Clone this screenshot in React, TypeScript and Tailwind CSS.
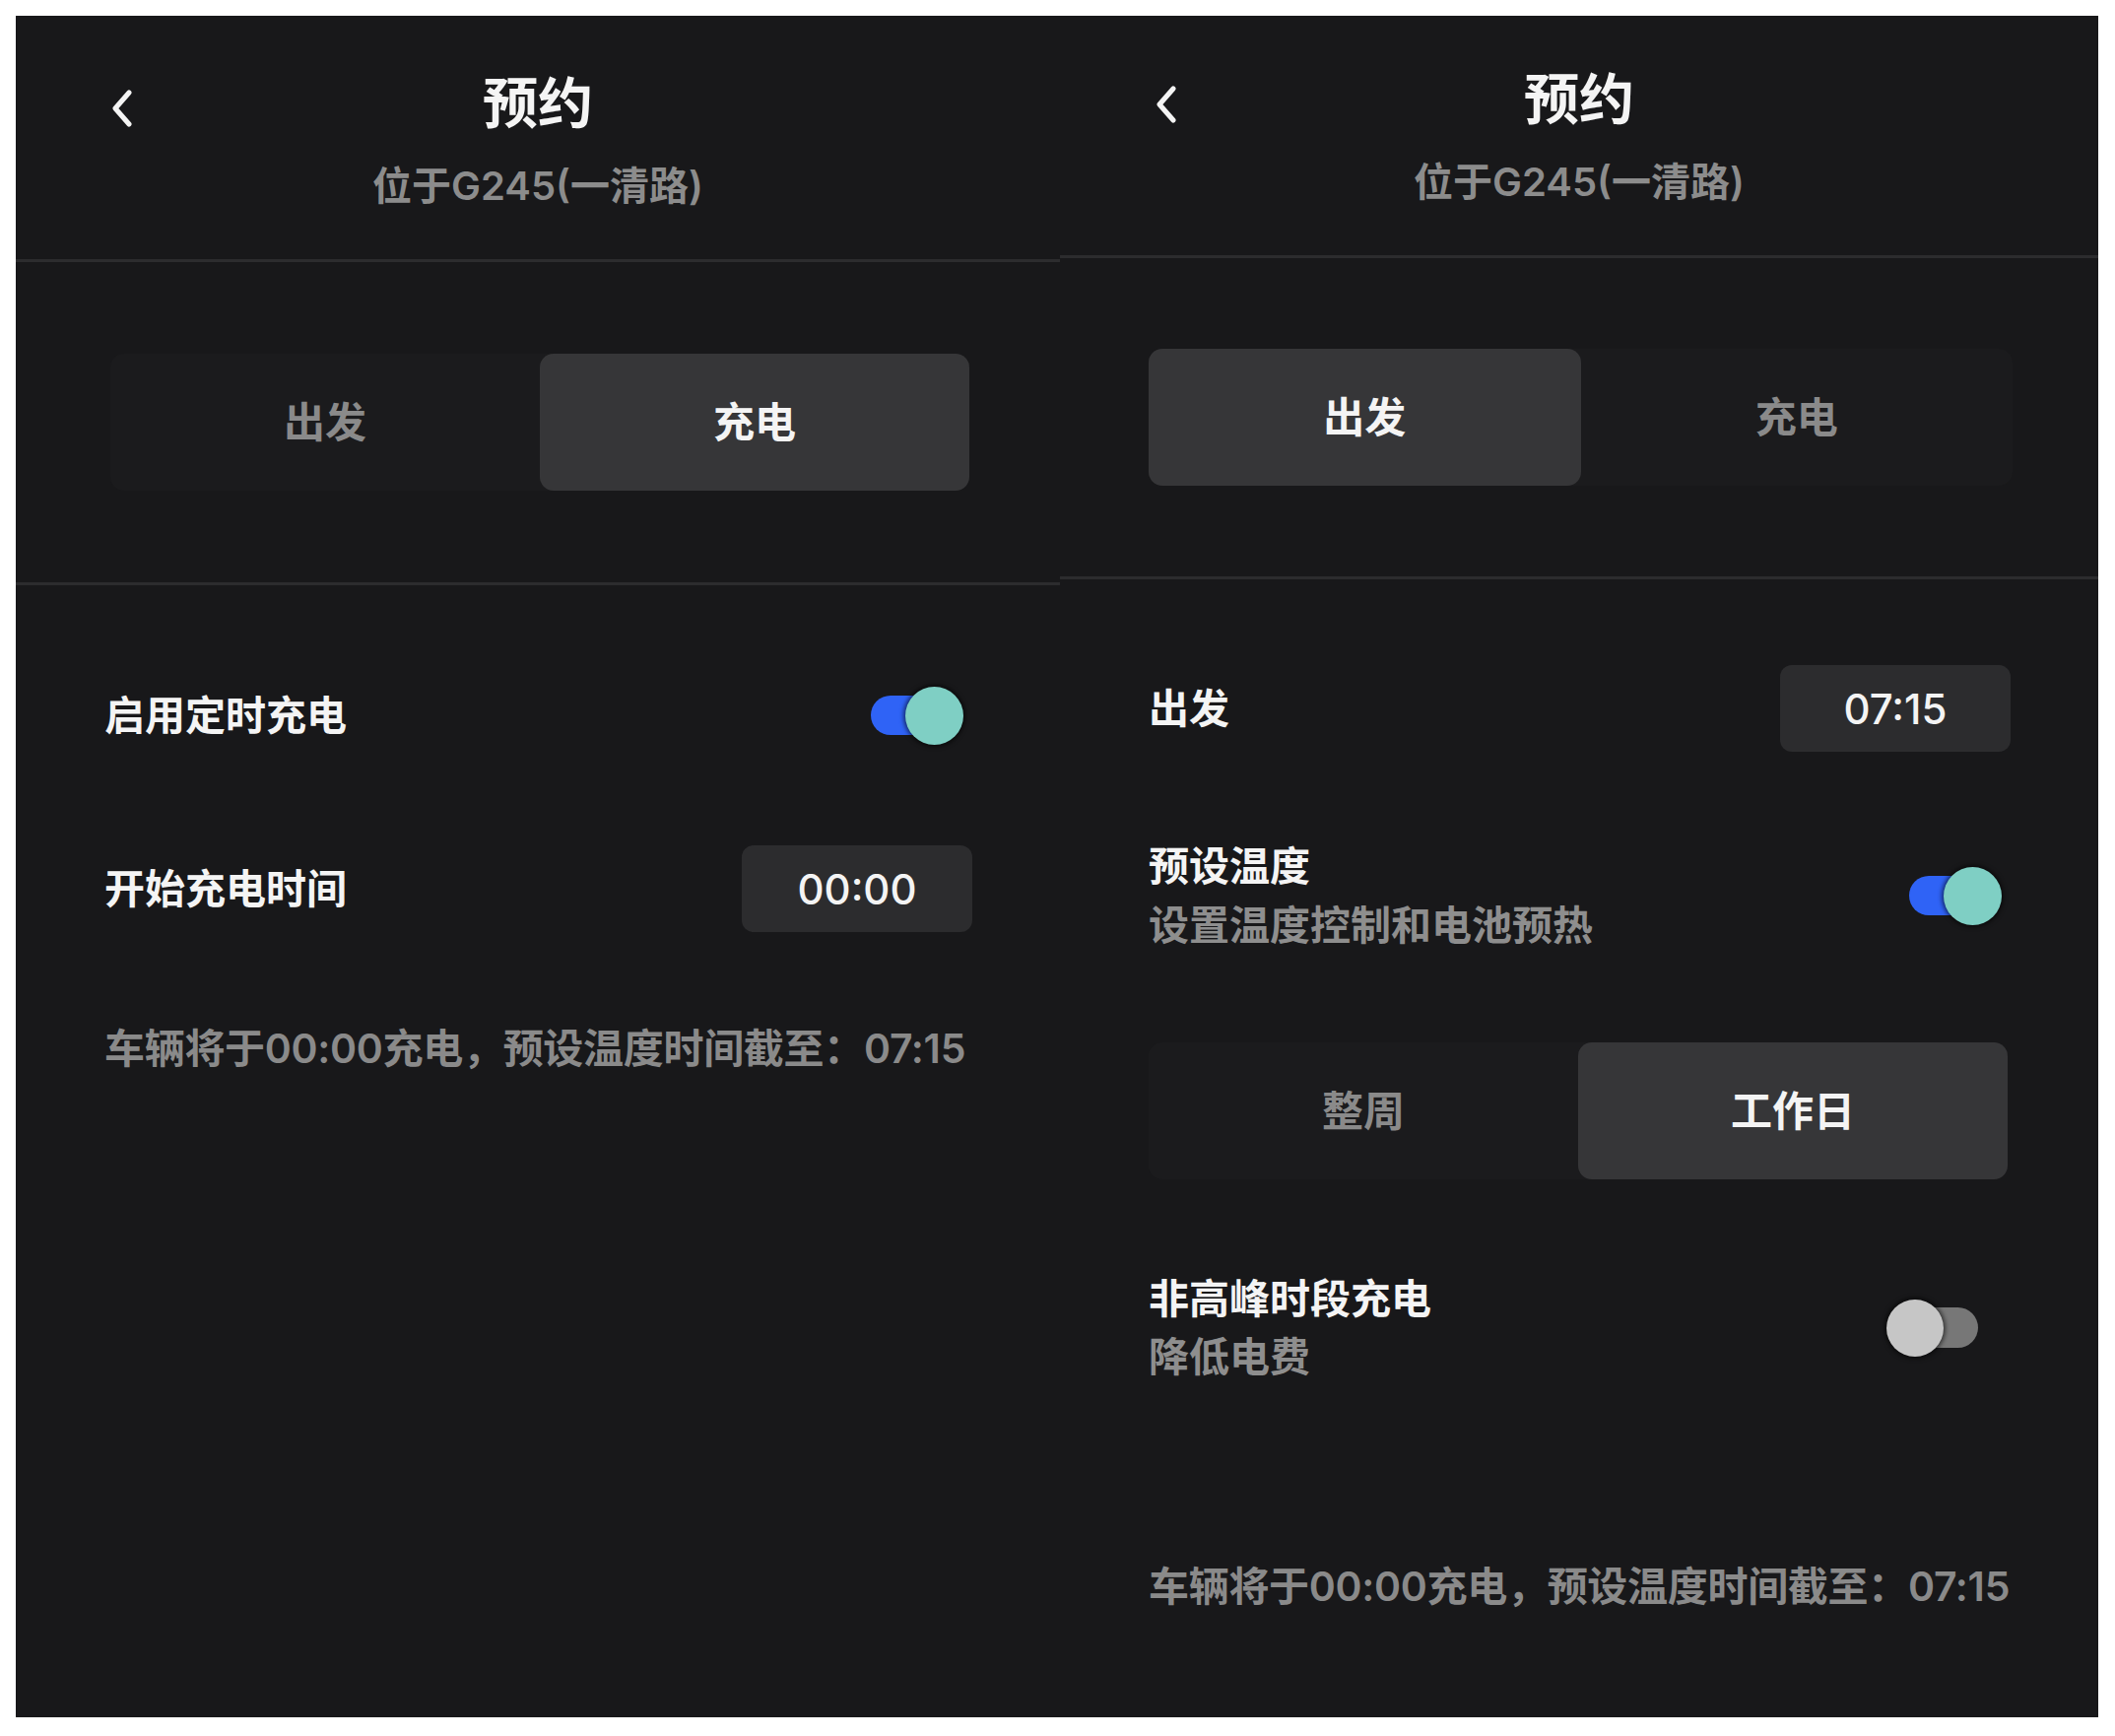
import React from "react";

const FONT = "font-[family-name:Inter,'Noto_Sans_CJK_SC',sans-serif]";

function BackChevron() {
  return (
    <svg width="22" height="38" viewBox="0 0 22 38" fill="none">
      <polyline
        points="18,3 4,19 18,35"
        stroke="#f4f4f4"
        strokeWidth="5"
        strokeLinecap="round"
        strokeLinejoin="round"
      />
    </svg>
  );
}

function Header({ top }: { top: string }) {
  return (
    <div className={`border-b-[3px] border-[#2c2c2e] pb-[50px] ${top}`}>
      <div className="grid grid-cols-[1fr_auto_1fr] items-center px-[97px]">
        <div className="mt-[10px] flex">
          <BackChevron />
        </div>
        <div className="text-[56px] font-bold leading-[68px] text-[#f4f4f4]">预约</div>
        <div />
      </div>
      <div className="mt-[26px] text-center text-[40px] font-semibold leading-[48px] text-[#8c8c8c]">
        位于G245(一清路)
      </div>
    </div>
  );
}

function Segmented({ items, active }: { items: string[]; active: number }) {
  return (
    <div className="grid h-[139px] grid-cols-2 rounded-[14px] bg-[#1b1b1d]">
      {items.map((label, i) => (
        <div
          key={label}
          className={
            i === active
              ? "flex items-center justify-center rounded-[14px] bg-[#363638] text-[42px] font-bold text-[#f4f4f4]"
              : "flex items-center justify-center text-[42px] font-bold text-[#8a8a8a]"
          }
        >
          {label}
        </div>
      ))}
    </div>
  );
}

function ToggleOn() {
  return (
    <div className="mr-[9px] flex items-center">
      <div className="h-[40px] w-[66px] rounded-full bg-[#2f63f6]" />
      <div className="relative -ml-[31px] size-[59px] rounded-full bg-[#7fcfc4] shadow-[0_0_4px_2px_rgba(0,0,0,0.55)]" />
    </div>
  );
}

function ToggleOff() {
  return (
    <div className="mr-[33px] flex items-center">
      <div className="relative z-10 size-[58px] rounded-full bg-[#c6c6c6] shadow-[0_0_4px_2px_rgba(0,0,0,0.55)]" />
      <div className="-ml-[31px] h-[41px] w-[66px] rounded-full bg-[#777777]" />
    </div>
  );
}

function TimeBox({ value }: { value: string }) {
  return (
    <div className="flex h-[88px] w-[234px] items-center justify-center rounded-[12px] bg-[#2c2c2e] text-[42px] font-medium text-[#f4f4f4]">
      {value}
    </div>
  );
}

function Label({ children }: { children: React.ReactNode }) {
  return <div className="text-[41px] font-bold leading-[50px] text-[#f4f4f4]">{children}</div>;
}

function Sub({ children }: { children: React.ReactNode }) {
  return <div className="text-[41px] font-semibold leading-[50px] text-[#8e8e8e]">{children}</div>;
}

function Note() {
  return (
    <div className="whitespace-nowrap text-[41px] font-semibold leading-[50px] tracking-[-0.3px] text-[#8a8a8a]">
      车辆将于00:00充电，预设温度时间截至：07:15
    </div>
  );
}

function ChargePanel() {
  return (
    <div className="flex w-[1060px] flex-col">
      <Header top="pt-[55px]" />
      <div className="border-b-[3px] border-[#2c2c2e] py-[93px] pl-[96px] pr-[92px]">
        <Segmented items={["出发", "充电"]} active={1} />
      </div>
      <div className="flex flex-col pl-[90px] pr-[89px] pt-[88px]">
        <div className="flex h-[88px] items-center justify-between">
          <Label>启用定时充电</Label>
          <ToggleOn />
        </div>
        <div className="mt-[88px] flex h-[88px] items-center justify-between">
          <Label>开始充电时间</Label>
          <TimeBox value="00:00" />
        </div>
        <div className="mt-[93px]">
          <Note />
        </div>
      </div>
    </div>
  );
}

function DepartPanel() {
  return (
    <div className="flex w-[1054px] flex-col">
      <Header top="pt-[51px]" />
      <div className="border-b-[3px] border-[#2c2c2e] py-[92px] pl-[90px] pr-[87px]">
        <Segmented items={["出发", "充电"]} active={0} />
      </div>
      <div className="flex flex-col pl-[90px] pr-[89px] pt-[87px]">
        <div className="flex h-[88px] items-center justify-between">
          <Label>出发</Label>
          <TimeBox value="07:15" />
        </div>
        <div className="mt-[91px] flex items-center justify-between">
          <div className="flex flex-col gap-[10px]">
            <Label>预设温度</Label>
            <Sub>设置温度控制和电池预热</Sub>
          </div>
          <ToggleOn />
        </div>
        <div className="mt-[94px] pr-[3px]">
          <Segmented items={["整周", "工作日"]} active={1} />
        </div>
        <div className="mt-[96px] flex items-center justify-between">
          <div className="flex flex-col gap-[9px]">
            <Label>非高峰时段充电</Label>
            <Sub>降低电费</Sub>
          </div>
          <ToggleOff />
        </div>
        <div className="mt-[183px]">
          <Note />
        </div>
      </div>
    </div>
  );
}

export default function App() {
  return (
    <div className={`h-[1762px] w-[2147px] bg-white pb-[19px] pl-[16px] pr-[17px] pt-[16px] ${FONT}`}>
      <div className="flex h-full bg-[#18181a]">
        <ChargePanel />
        <DepartPanel />
      </div>
    </div>
  );
}
